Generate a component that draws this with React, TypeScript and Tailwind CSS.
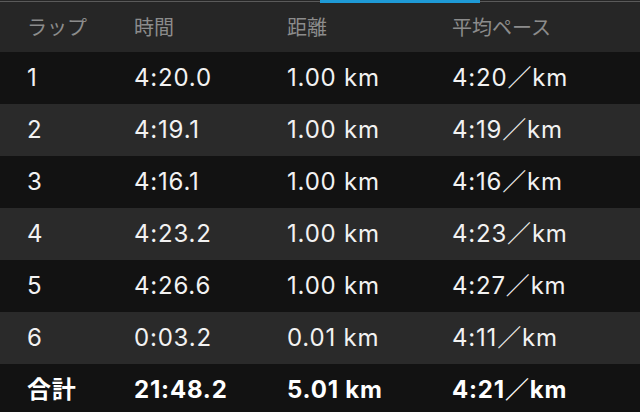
import React from 'react';

const laps = [
  { lap: '1', time: '4:20.0', dist: '1.00 km', pace: '4:20／km' },
  { lap: '2', time: '4:19.1', dist: '1.00 km', pace: '4:19／km' },
  { lap: '3', time: '4:16.1', dist: '1.00 km', pace: '4:16／km' },
  { lap: '4', time: '4:23.2', dist: '1.00 km', pace: '4:23／km' },
  { lap: '5', time: '4:26.6', dist: '1.00 km', pace: '4:27／km' },
  { lap: '6', time: '0:03.2', dist: '0.01 km', pace: '4:11／km' },
];

const font = "font-['Inter','Noto_Sans_CJK_JP',sans-serif]";

const Row = ({ cells, className }: { cells: string[]; className: string }) => (
  <div className={`flex h-[52px] items-center ${className}`}>
    <div className="w-[134px] pl-[27px]">{cells[0]}</div>
    <div className="w-[153px]">{cells[1]}</div>
    <div className="w-[165px]">{cells[2]}</div>
    <div className="flex-1">{cells[3]}</div>
  </div>
);

export default function App() {
  return (
    <div className={`w-[640px] h-[412px] overflow-hidden bg-[#121212] ${font}`}>
      {/* tab indicator */}
      <div className="relative h-0">
        <div className="absolute left-0 top-[1px] h-px w-full bg-[#5a5a5a]" />
        <div className="absolute left-[320px] top-0 h-[3px] w-[160px] bg-[#1e9ad6]" />
      </div>
      <Row
        cells={['ラップ', '時間', '距離', '平均ペース']}
        className="bg-[#262626] text-[20px] text-[#8c8c8c] pt-[3px]"
      />
      {laps.map((l, i) => (
        <Row
          key={l.lap}
          cells={[l.lap, l.time, l.dist, l.pace]}
          className={`text-[24px] tracking-[0.8px] text-[#f2f2f2] ${i % 2 === 0 ? 'bg-[#121212]' : 'bg-[#2a2a2a]'}`}
        />
      ))}
      <Row
        cells={['合計', '21:48.2', '5.01 km', '4:21／km']}
        className="bg-[#121212] text-[24px] tracking-[0.8px] font-bold text-white"
      />
    </div>
  );
}
